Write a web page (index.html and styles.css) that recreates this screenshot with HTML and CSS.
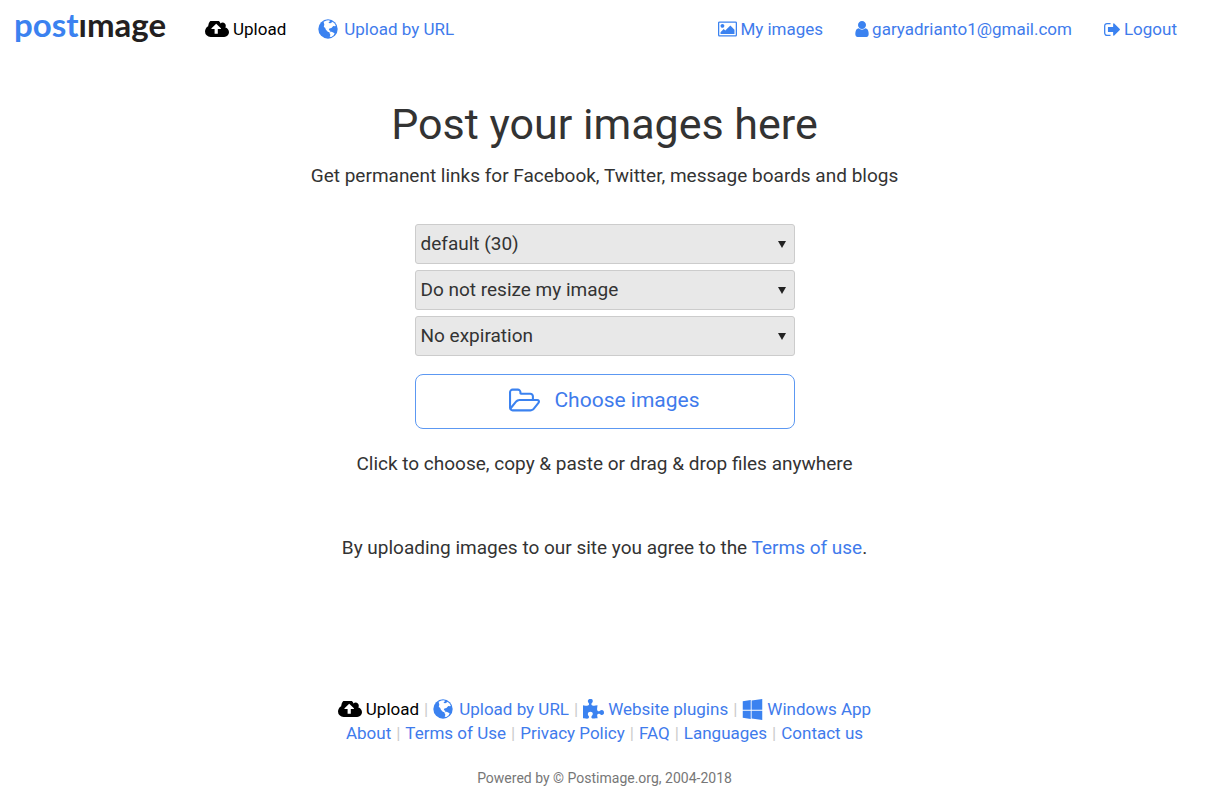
FILE: index.html
```html
<!DOCTYPE html>
<html lang="en">
<head>
    <meta charset="UTF-8">
    <meta name="viewport" content="width=device-width, initial-scale=1.0">
    <title>Postimage</title>
    <link rel="stylesheet" href="styles.css">
</head>
<body>
    <!-- shared icons -->
    <svg class="icon-defs" aria-hidden="true">
        <symbol id="icon-cloud" viewBox="0 256 1920 1280">
            <path d="M1280 864q0-14-9-23l-352-352q-9-9-23-9t-23 9l-351 351q-10 12-10 24 0 14 9 23t23 9h224v352q0 13 9.5 22.5t22.5 9.5h192q13 0 22.5-9.5t9.5-22.5v-352h224q13 0 22.5-9.5t9.5-22.5zm640 288q0 159-112.5 271.5t-271.5 112.5h-1088q-185 0-316.5-131.5t-131.5-316.5q0-130 70-240t188-165q-2-30-2-43 0-212 150-362t362-150q156 0 285.5 87t188.5 231q71-62 166-62 106 0 181 75t75 181q0 76-41 138 130 31 213.5 135.5t83.5 238.5z"/>
        </symbol>
        <symbol id="icon-globe" viewBox="0 0 20 20">
            <circle cx="10" cy="10" r="9.7"/>
            <path fill="#fff" d="M5.6 2.8l3-1.4 2.6-.2.8 1-1.6 1.2 1.4.9 1.5-.3.7-1.3 2.2 1.3 1.6 2.6-.6.7-1.9-.3-1.9 1.9-2 .5-.6 1.7 1.7.8-.5 1.5-2.2-.7-1.9-1.9-.8-2.1-1.3-.8.5-2.5z"/>
            <path fill="#fff" d="M11.2 13.4l2.4-.7 3 1.5-.9 2-2.4 1.7-1.6-.2.7-1.9z"/>
        </symbol>
        <symbol id="icon-picture" viewBox="-64 128 1920 1536">
            <path d="M576 576q0 80-56 136t-136 56-136-56-56-136 56-136 136-56 136 56 56 136zm1024 384v448h-1408v-192l320-320 160 160 512-512zm96-704h-1600q-13 0-22.5 9.5t-9.5 22.5v1216q0 13 9.5 22.5t22.5 9.5h1600q13 0 22.5-9.5t9.5-22.5v-1216q0-13-9.5-22.5t-22.5-9.5zm160 32v1216q0 66-47 113t-113 47h-1600q-66 0-113-47t-47-113v-1216q0-66 47-113t113-47h1600q66 0 113 47t47 113z"/>
        </symbol>
        <symbol id="icon-user" viewBox="256 128 1280 1536">
            <path d="M1536 1399q0 109-62.5 187t-150.5 78h-854q-88 0-150.5-78t-62.5-187q0-85 8.5-160.5t31.5-152 58.5-131 94-89 134.5-34.5q131 128 313 128t313-128q76 0 134.5 34.5t94 89 58.5 131 31.5 152 8.5 160.5zm-256-887q0 159-112.5 271.5t-271.5 112.5-271.5-112.5-112.5-271.5 112.5-271.5 271.5-112.5 271.5 112.5 112.5 271.5z"/>
        </symbol>
        <symbol id="icon-logout" viewBox="64 256 1568 1280">
            <path d="M704 1440q0 4 1 20t.5 26.5-3 23.5-10 19.5-20.5 6.5h-320q-119 0-203.5-84.5t-84.5-203.5v-704q0-119 84.5-203.5t203.5-84.5h320q13 0 22.5 9.5t9.5 22.5q0 4 1 20t.5 26.5-3 23.5-10 19.5-20.5 6.5h-320q-66 0-113 47t-47 113v704q0 66 47 113t113 47h312l11.5 1 11.5 3 8 5.5 7 9 2 13.5zm928-544q0 26-19 45l-544 544q-19 19-45 19t-45-19-19-45v-288h-448q-26 0-45-19t-19-45v-384q0-26 19-45t45-19h448v-288q0-26 19-45t45-19 45 19l544 544q19 19 19 45z"/>
        </symbol>
        <symbol id="icon-folder" viewBox="64 128 1909 1408">
            <path d="M1845 931q0-35-53-35h-1088q-40 0-85.5 21.5t-71.5 52.5l-294 363q-18 24-18 40 0 35 53 35h1088q40 0 86-22t71-53l294-363q18-22 18-39zm-1141-163h768v-160q0-40-28-68t-68-28h-576q-40 0-68-28t-28-68v-64q0-40-28-68t-68-28h-320q-40 0-68 28t-28 68v853l256-315q44-53 116-87.5t140-34.5zm1269 163q0 62-46 120l-295 363q-43 53-116 87.5t-140 34.5h-1088q-92 0-158-66t-66-158v-960q0-92 66-158t158-66h320q92 0 158 66t66 158v32h544q92 0 158 66t66 158v160h192q54 0 99 24.5t67 70.5q15 32 15 68z"/>
        </symbol>
        <symbol id="icon-puzzle" viewBox="91 0 1664 1664">
            <path d="M1755 1083q0 81-44.5 135t-123.5 54q-41 0-77.5-17.5t-59-38-56.5-38-71-17.5q-110 0-110 124 0 39 16 115t15 115v5q-22 0-33 1-34 3-97.5 11.5t-115.5 13.5-98 5q-61 0-103-26.5t-42-83.5q0-37 17.5-71t38-56.5 38-59 17.5-77.5q0-79-54-123.5t-135-44.5q-84 0-143 45.5t-59 127.5q0 43 15 83t33.5 64.5 33.5 53 15 50.5q0 45-46 89-37 35-117 35-95 0-245-24-9-2-27.5-4t-27.5-4l-13-2q-1 0-3-1-2 0-2-1v-1024q2 1 17.5 3.5t34 5 21.5 3.5q150 24 245 24 80 0 117-35 46-44 46-89 0-22-15-50.5t-33.5-53-33.5-64.5-15-83q0-82 59-127.5t144-45.5q80 0 134 44.5t54 123.5q0 41-17.5 77.5t-38 59-38 56.5-17.5 71q0 57 42 83.5t103 26.5q64 0 180-15t163-17v2q-1 2-3.5 17.5t-5 34-3.5 21.5q-24 150-24 245 0 80 35 117 44 46 89 46 22 0 50.5-15t53-33.5 64.5-33.5 83-15q82 0 127.5 59t45.5 143z"/>
        </symbol>
        <symbol id="icon-windows" viewBox="64 0 1664 1792">
            <path d="M746 1006v693l-682-94v-599zM746 93v829h-682v-735zM1728 1006v786l-907-125v-661zM1728 0v922h-907v-797z"/>
        </symbol>
    </svg>

    <header class="navbar">
        <a class="logo" href="#"><span>post</span>ımage</a>
        <nav class="nav-left">
            <a class="active" href="#"><svg class="icon cloud"><use href="#icon-cloud"/></svg>Upload</a>
            <a href="#"><svg class="icon globe"><use href="#icon-globe"/></svg>Upload by URL</a>
        </nav>
        <nav class="nav-right">
            <a href="#"><svg class="icon picture"><use href="#icon-picture"/></svg>My images</a>
            <a href="#"><svg class="icon user"><use href="#icon-user"/></svg>garyadrianto1@gmail.com</a>
            <a href="#"><svg class="icon logout"><use href="#icon-logout"/></svg>Logout</a>
        </nav>
    </header>

    <main>
        <h1>Post your images here</h1>
        <p>Get permanent links for Facebook, Twitter, message boards and blogs</p>
        <form class="upload-form">
            <div class="select-wrap">
                <select id="gallery" aria-label="Gallery">
                    <option>default (30)</option>
                </select>
            </div>
            <div class="select-wrap">
                <select id="resize" aria-label="Image size">
                    <option>Do not resize my image</option>
                </select>
            </div>
            <div class="select-wrap">
                <select id="expire" aria-label="Expiration">
                    <option>No expiration</option>
                </select>
            </div>
            <button type="button" class="btn-choose"><svg class="icon folder"><use href="#icon-folder"/></svg>Choose images</button>
        </form>
        <p>Click to choose, copy &amp; paste or drag &amp; drop files anywhere</p>
        <p class="terms">By uploading images to our site you agree to the <a href="#">Terms of use</a>.</p>
    </main>

    <footer>
        <ul class="footer-links">
            <li><a class="active" href="#"><svg class="icon cloud"><use href="#icon-cloud"/></svg>Upload</a></li>
            <li><a href="#"><svg class="icon globe"><use href="#icon-globe"/></svg>Upload by URL</a></li>
            <li><a href="#"><svg class="icon puzzle"><use href="#icon-puzzle"/></svg>Website plugins</a></li>
            <li><a href="#"><svg class="icon windows"><use href="#icon-windows"/></svg>Windows App</a></li>
        </ul>
        <ul class="footer-links">
            <li><a href="#">About</a></li>
            <li><a href="#">Terms of Use</a></li>
            <li><a href="#">Privacy Policy</a></li>
            <li><a href="#">FAQ</a></li>
            <li><a href="#">Languages</a></li>
            <li><a href="#">Contact us</a></li>
        </ul>
        <p class="powered">Powered by © Postimage.org, 2004-2018</p>
    </footer>
</body>
</html>
```

FILE: styles.css
```css
* {
    box-sizing: border-box;
}
body {
    font-family: Roboto, sans-serif;
    font-size: 19px;
    line-height: 28px;
    margin: 0;
    color: #333;
    background: #fff;
    text-align: center;
}
a {
    color: #3f7bec;
    text-decoration: none;
}
a.active {
    color: #000;
}
.icon-defs {
    display: none;
}

/* icons */
.icon {
    flex: none;
    fill: #3b82f0;
}
.active .icon {
    fill: #000;
}
.cloud {
    width: 24px;
    height: 16px;
    margin-right: 4px;
}
.globe {
    width: 20px;
    height: 20px;
    margin-right: 6px;
}
.picture {
    width: 19px;
    height: 16px;
    margin-right: 3px;
}
.user {
    width: 14px;
    height: 16px;
    margin-right: 3px;
}
.logout {
    width: 16px;
    height: 13px;
    margin-right: 4px;
}
.folder {
    width: 31px;
    height: 24px;
    margin-right: 14px;
}
.puzzle {
    width: 21px;
    height: 21px;
    margin-right: 4px;
}
.windows {
    width: 21px;
    height: 21px;
    margin-right: 4px;
}

/* top bar */
.navbar {
    display: flex;
    align-items: center;
    height: 58px;
    padding: 0 32px 0 14px;
    font-size: 17px;
}
.navbar nav {
    display: flex;
    gap: 32px;
}
.navbar nav a {
    display: flex;
    align-items: center;
}
.logo {
    width: 154px;
    margin-right: 37px;
    padding-bottom: 10px;
    font-family: Lato, sans-serif;
    font-size: 33px;
    font-weight: 700;
    font-variant-ligatures: none;
    text-align: left;
    color: #231f20;
}
.logo span {
    color: #3b82f0;
}
.navbar .nav-right {
    margin-left: auto;
}

/* upload area */
h1 {
    margin: 41px 0 13px;
    font-size: 43px;
    font-weight: 400;
    line-height: 50px;
}
p {
    margin: 0;
}
.upload-form {
    display: flex;
    flex-direction: column;
    gap: 6px;
    width: 380px;
    max-width: 100%;
    margin: 34px auto 21px;
}
.select-wrap {
    position: relative;
}
.select-wrap::after {
    content: "";
    position: absolute;
    top: 17px;
    right: 9px;
    border: 4px solid transparent;
    border-top: 7px solid #222;
    border-bottom: 0;
    pointer-events: none;
}
select {
    display: block;
    width: 100%;
    height: 40px;
    padding: 0 5px;
    font: inherit;
    color: #333;
    background: #e8e8e8;
    border: 1px solid #ccc;
    border-radius: 3px;
    appearance: none;
}
.btn-choose {
    display: flex;
    align-items: center;
    justify-content: center;
    height: 55px;
    margin-top: 12px;
    padding-bottom: 4px;
    font-family: inherit;
    font-size: 21px;
    color: #3f7bec;
    background: #fff;
    border: 1px solid #5c98f2;
    border-radius: 8px;
    cursor: pointer;
}
.terms {
    margin-top: 56px;
}

/* footer */
footer {
    margin-top: 135px;
    font-size: 17px;
    line-height: 24px;
}
.footer-links {
    display: flex;
    flex-wrap: wrap;
    justify-content: center;
    margin: 0;
    padding: 0;
    list-style: none;
}
.footer-links li {
    display: flex;
}
.footer-links a {
    display: flex;
    align-items: center;
}
.footer-links li + li::before {
    content: "|";
    margin: 0 5px;
    color: #ccc;
}
.powered {
    margin-top: 21px;
    font-size: 14px;
    color: #777;
}
```
